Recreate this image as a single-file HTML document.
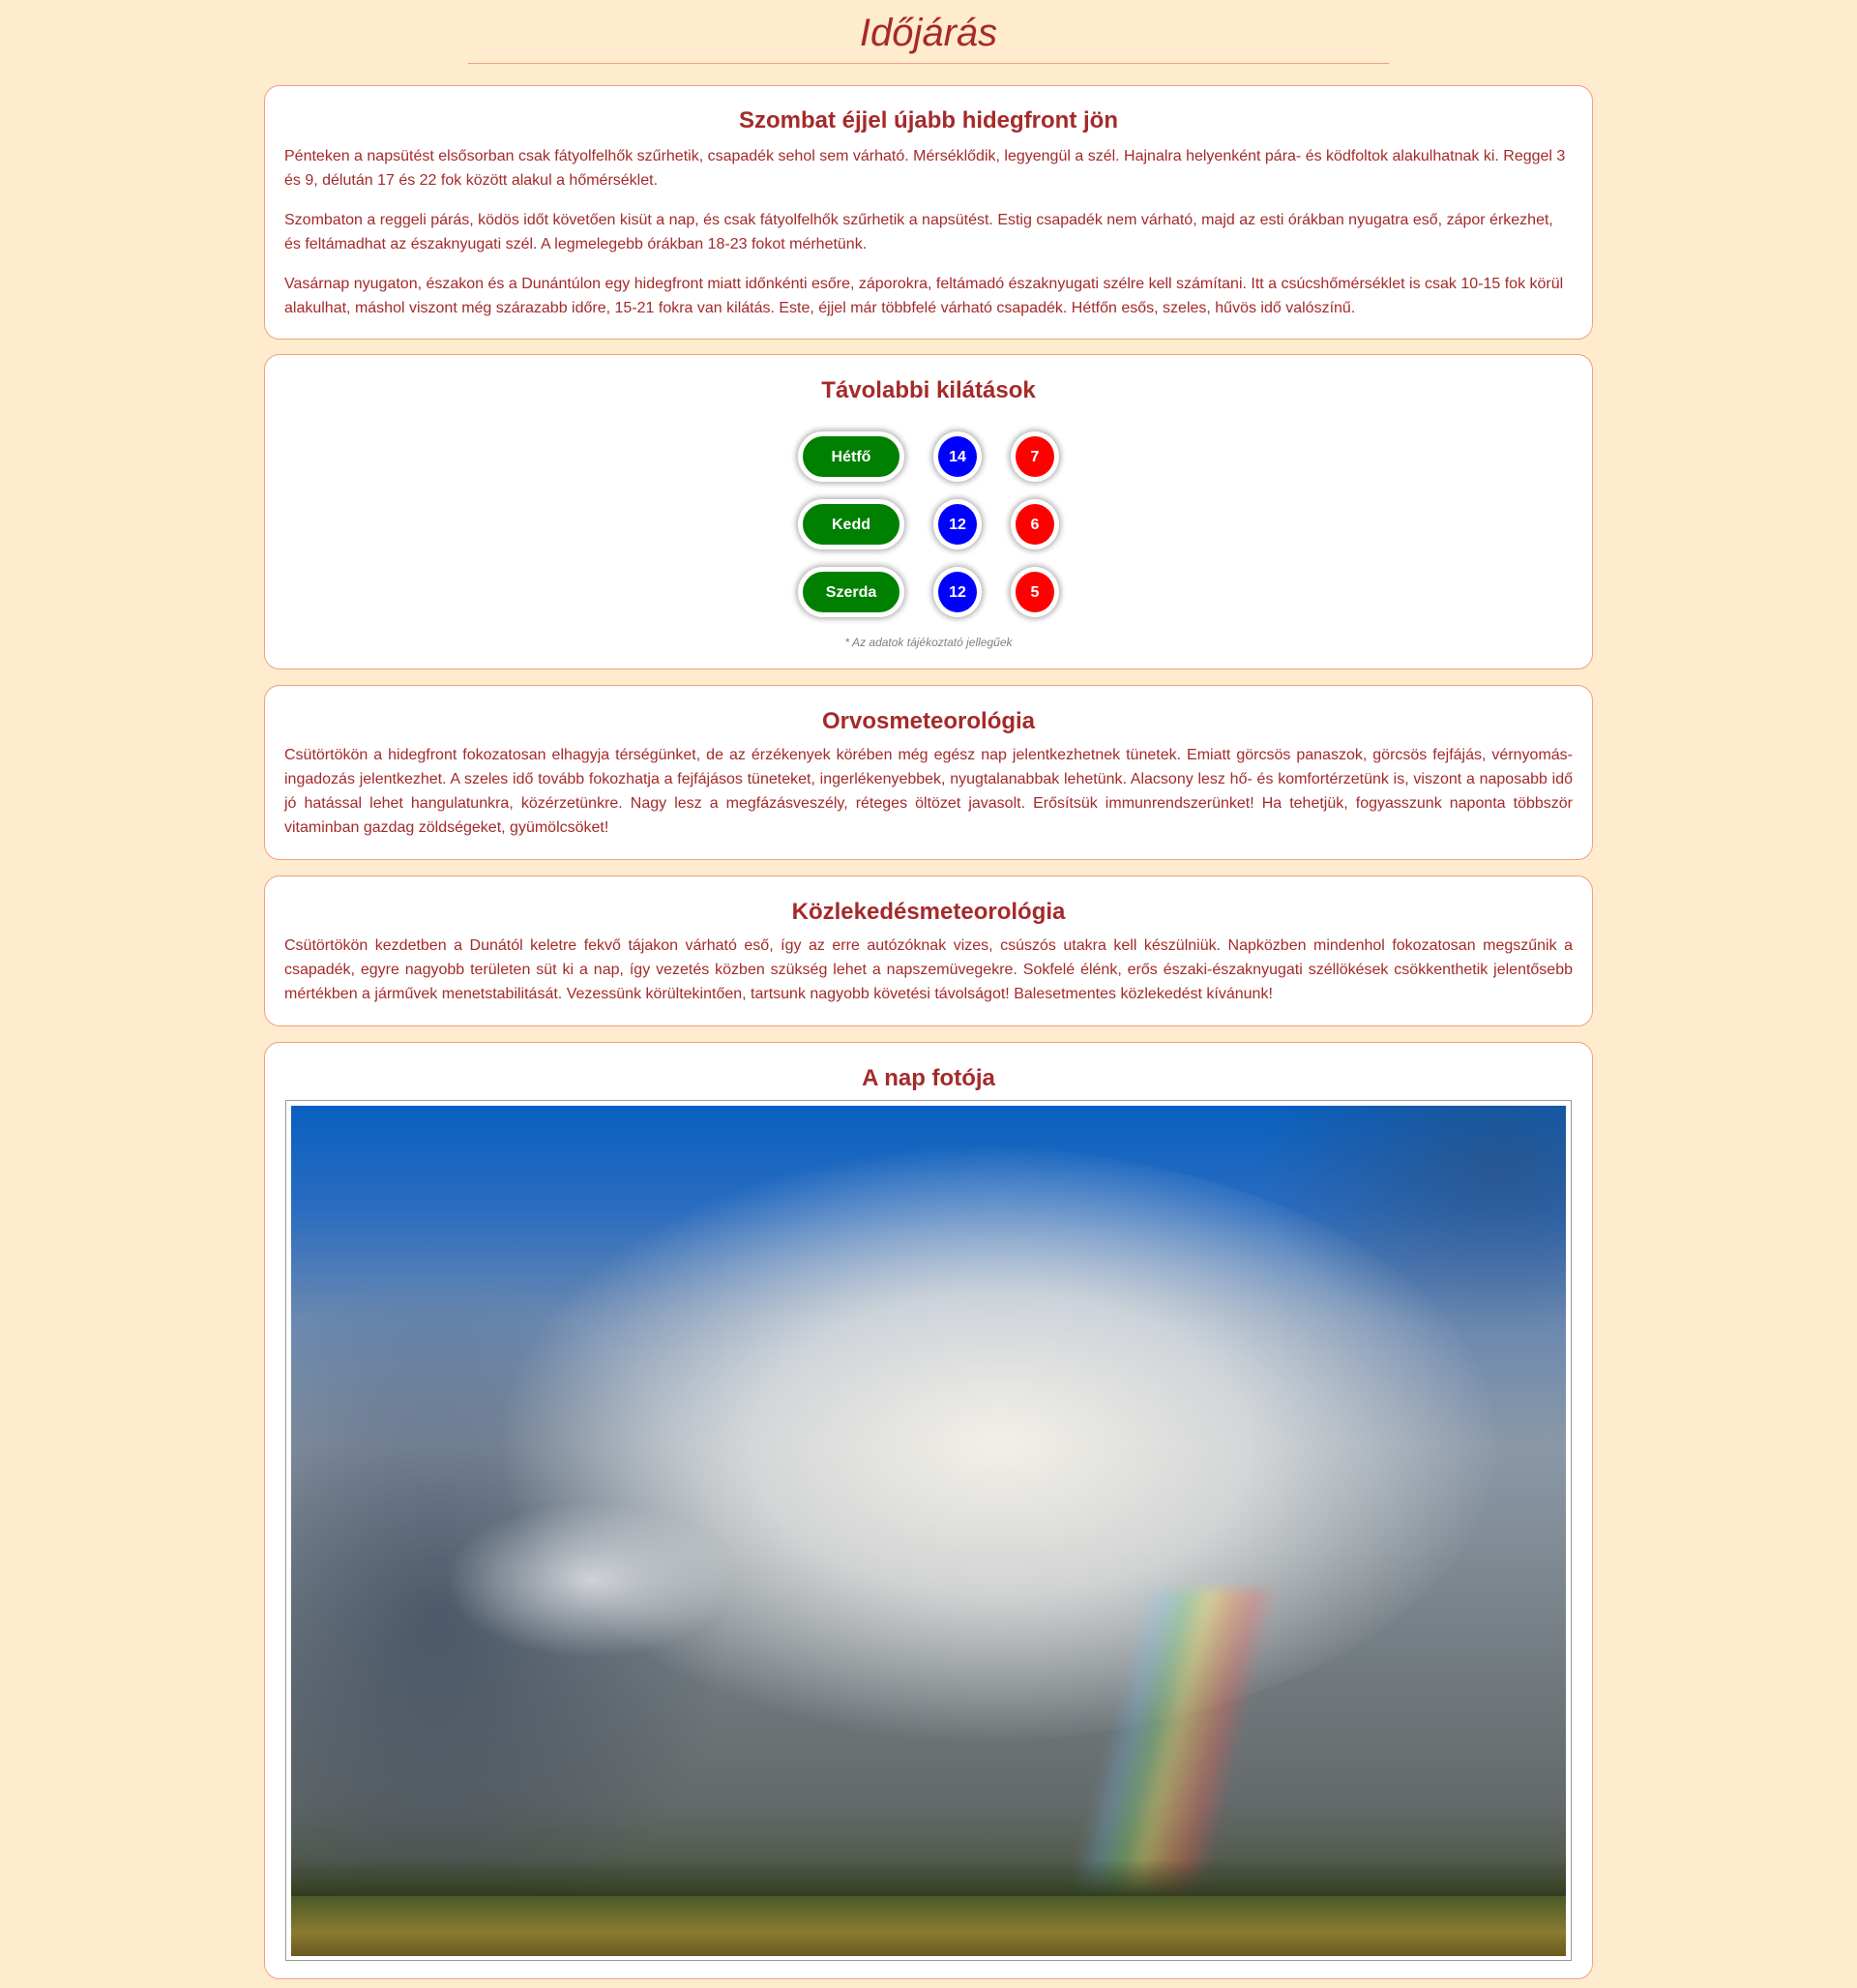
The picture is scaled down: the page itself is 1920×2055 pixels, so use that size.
<!DOCTYPE html>
<html><head><meta charset="utf-8"><style>
body{margin:0;background:#ffebcd;font-family:"Liberation Sans",Arial,sans-serif;color:#a52a2a;width:1920px;height:2055px;position:relative;overflow:hidden}
h1{position:absolute;top:6px;left:0;width:1920px;margin:0;text-align:center;font-weight:normal;font-style:italic;font-size:40px;line-height:56px;color:#a52a2a}
.hr{position:absolute;left:484px;width:952px;top:65px;height:1px;background:#f0a080}
.card{position:absolute;left:273px;width:1374px;background:#fff;border:1px solid #f0a080;border-radius:16px;box-sizing:border-box;padding:0 20px}
h2{margin:0;text-align:center;font-size:24px;line-height:30px;font-weight:bold}
p{margin:0;font-size:16px;line-height:25px}
.j{text-align:justify}
.pill{position:absolute;background:#008000;color:#fff;font-weight:bold;font-size:16px;text-align:center;border:5px solid #fff;box-shadow:0 0 6px 2px rgba(0,0,0,.3);box-sizing:border-box}
.pill.d{width:110px;height:52px;border-radius:26px;line-height:43px}
.pill.c{width:50px;height:52px;border-radius:50%;line-height:43px}
.blob{position:absolute;border-radius:50%}
</style></head><body>
<h1>Időjárás</h1>
<div class="hr"></div>

<div class="card" style="top:88px;height:263px;padding-top:21px">
<h2>Szombat éjjel újabb hidegfront jön</h2>
<p style="margin-top:9px">Pénteken a napsütést elsősorban csak fátyolfelhők szűrhetik, csapadék sehol sem várható. Mérséklődik, legyengül a szél. Hajnalra helyenként pára- és ködfoltok alakulhatnak ki. Reggel 3 és 9, délután 17 és 22 fok között alakul a hőmérséklet.</p>
<p style="margin-top:16px">Szombaton a reggeli párás, ködös időt követően kisüt a nap, és csak fátyolfelhők szűrhetik a napsütést. Estig csapadék nem várható, majd az esti órákban nyugatra eső, zápor érkezhet, és feltámadhat az északnyugati szél. A legmelegebb órákban 18-23 fokot mérhetünk.</p>
<p style="margin-top:16px">Vasárnap nyugaton, északon és a Dunántúlon egy hidegfront miatt időnkénti esőre, záporokra, feltámadó északnyugati szélre kell számítani. Itt a csúcshőmérséklet is csak 10-15 fok körül alakulhat, máshol viszont még szárazabb időre, 15-21 fokra van kilátás. Este, éjjel már többfelé várható csapadék. Hétfőn esős, szeles, hűvös idő valószínű.</p>
</div>

<div class="card" style="top:366px;height:326px;padding-top:22px">
<h2>Távolabbi kilátások</h2>
</div>
<div class="pill d" style="left:825px;top:446px">Hétfő</div>
<div class="pill c" style="left:965px;top:446px;background:#0000ff">14</div>
<div class="pill c" style="left:1045px;top:446px;background:#ff0000">7</div>
<div class="pill d" style="left:825px;top:516px">Kedd</div>
<div class="pill c" style="left:965px;top:516px;background:#0000ff">12</div>
<div class="pill c" style="left:1045px;top:516px;background:#ff0000">6</div>
<div class="pill d" style="left:825px;top:586px">Szerda</div>
<div class="pill c" style="left:965px;top:586px;background:#0000ff">12</div>
<div class="pill c" style="left:1045px;top:586px;background:#ff0000">5</div>
<div style="position:absolute;top:657px;left:0;width:1920px;text-align:center;font-size:12px;font-style:italic;color:#808080">* Az adatok tájékoztató jellegűek</div>

<div class="card" style="top:708px;height:181px;padding-top:22px">
<h2>Orvosmeteorológia</h2>
<p class="j" style="margin-top:7px">Csütörtökön a hidegfront fokozatosan elhagyja térségünket, de az érzékenyek körében még egész nap jelentkezhetnek tünetek. Emiatt görcsös panaszok, görcsös fejfájás, vérnyomás-ingadozás jelentkezhet. A szeles idő tovább fokozhatja a fejfájásos tüneteket, ingerlékenyebbek, nyugtalanabbak lehetünk. Alacsony lesz hő- és komfortérzetünk is, viszont a naposabb idő jó hatással lehet hangulatunkra, közérzetünkre. Nagy lesz a megfázásveszély, réteges öltözet javasolt. Erősítsük immunrendszerünket! Ha tehetjük, fogyasszunk naponta többször vitaminban gazdag zöldségeket, gyümölcsöket!</p>
</div>

<div class="card" style="top:905px;height:156px;padding-top:22px">
<h2>Közlekedésmeteorológia</h2>
<p class="j" style="margin-top:7px">Csütörtökön kezdetben a Dunától keletre fekvő tájakon várható eső, így az erre autózóknak vizes, csúszós utakra kell készülniük. Napközben mindenhol fokozatosan megszűnik a csapadék, egyre nagyobb területen süt ki a nap, így vezetés közben szükség lehet a napszemüvegekre. Sokfelé élénk, erős északi-északnyugati széllökések csökkenthetik jelentősebb mértékben a járművek menetstabilitását. Vezessünk körültekintően, tartsunk nagyobb követési távolságot! Balesetmentes közlekedést kívánunk!</p>
</div>

<div class="card" style="top:1077px;height:969px;padding-top:22px">
<h2>A nap fotója</h2>
</div>
<div style="position:absolute;left:295px;top:1137px;width:1330px;height:890px;border:1px solid #999;box-sizing:border-box;background:#fff"></div>
<div style="position:absolute;left:301px;top:1143px;width:1318px;height:879px;overflow:hidden;background:linear-gradient(180deg,#0860c0 0%,#2a6cc0 12%,#6a88b0 25%,#8a98a8 40%,#7e8890 55%,#6e767a 70%,#646a6a 82%,#50584a 90%,#6a6a30 95%,#7a6a28 100%)">
<div class="blob" style="left:-150px;top:180px;width:600px;height:700px;background:radial-gradient(closest-side,rgba(40,55,80,.55),rgba(40,55,80,0))"></div>
<div class="blob" style="left:100px;top:40px;width:1150px;height:620px;background:radial-gradient(closest-side at 55% 50%,rgba(248,244,235,.95) 0%,rgba(230,230,228,.8) 50%,rgba(200,205,215,0) 100%)"></div>
<div class="blob" style="left:160px;top:410px;width:300px;height:160px;background:radial-gradient(closest-side,rgba(230,232,235,.8),rgba(230,232,235,0))"></div>
<div class="blob" style="left:1000px;top:-120px;width:500px;height:360px;background:radial-gradient(closest-side,rgba(50,70,100,.5),rgba(50,70,100,0))"></div>
<div style="position:absolute;left:840px;top:500px;width:140px;height:330px;transform:skewX(-14deg);background:linear-gradient(90deg,rgba(150,120,255,0),rgba(120,200,255,.25),rgba(120,220,120,.35),rgba(255,240,100,.4),rgba(255,160,80,.4),rgba(255,90,80,.3),rgba(255,90,80,0));filter:blur(6px)"></div>
<div style="position:absolute;left:0;bottom:60px;width:1318px;height:40px;background:linear-gradient(180deg,rgba(40,50,30,0),#2e3a22)"></div>
<div style="position:absolute;left:0;bottom:0;width:1318px;height:62px;background:linear-gradient(180deg,#4a5a28,#8a7a30 60%,#6a5a20)"></div>
</div>
</body></html>
